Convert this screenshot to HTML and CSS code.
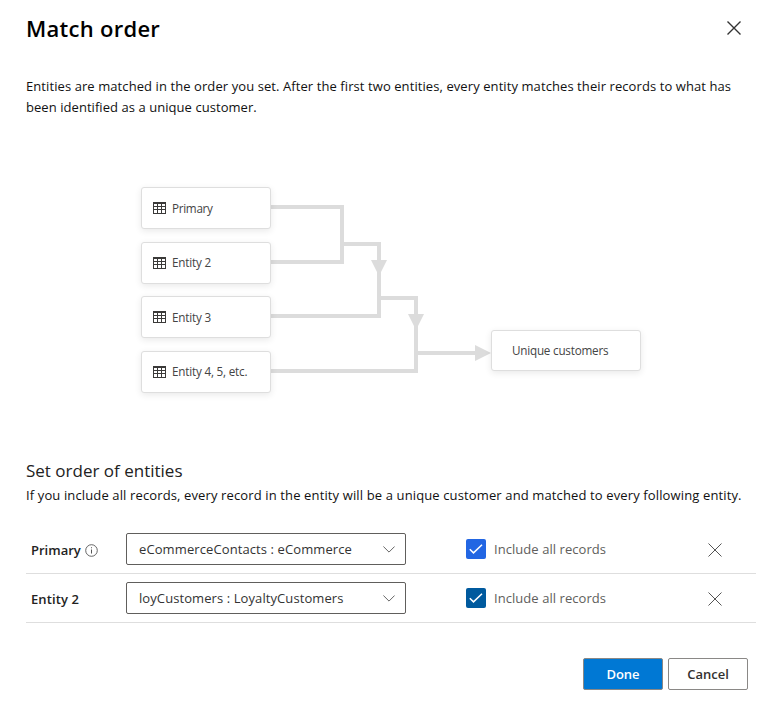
FILE: index.html
```html
<!DOCTYPE html>
<html lang="en">
<head>
<meta charset="utf-8">
<title>Match order</title>
<link rel="stylesheet" href="styles.css">
</head>
<body>
<svg class="defs" width="0" height="0">
  <symbol id="table" viewBox="0 0 13 12"><path d="M0 0h13v12H0zM1 2v2h3V2zM5 2v2h3V2zM9 2v2h3V2zM1 5v2h3V5zM5 5v2h3V5zM9 5v2h3V5zM1 8v3h3V8zM5 8v3h3V8zM9 8v3h3V8z" fill="#3b3a39" fill-rule="evenodd"/></symbol>
  <symbol id="cross" viewBox="0 0 14 14"><path d="M.5 .5l13 13M13.5 .5l-13 13" fill="none" stroke="currentColor"/></symbol>
  <symbol id="chevron" viewBox="0 0 12 7"><path d="M.4 .5L6 6.1 11.6 .5" fill="none" stroke="currentColor"/></symbol>
  <symbol id="check" viewBox="0 0 14 10"><path d="M.8 5.2l3.7 3.7L13 .8" fill="none" stroke="#fff" stroke-width="1.5"/></symbol>
</svg>
<main class="dialog">
  <header class="header">
    <h1 class="title"><span>Match order</span></h1>
    <button class="close" aria-label="Close"><svg width="14" height="14"><use href="#cross"/></svg></button>
  </header>
  <p class="intro"><span class="line-one">Entities are matched in the order you set. After the first two entities, every entity matches their records to what has</span><br><span class="line-two">been identified as a unique customer.</span></p>

  <section class="diagram">
    <svg class="links" width="778" height="230" viewBox="0 175 778 230">
      <g fill="none" stroke="#dcdcdc" stroke-width="4">
        <path d="M271 207h71v55h-71M342 244h37v72H271M379 298h37v73H271M416 353h60"/>
      </g>
      <path d="M371 260h16l-8 16zM408 314h16l-8 16zM475 345v16l16-8z" fill="#dcdcdc"/>
    </svg>
    <div class="node n1"><svg width="13" height="12"><use href="#table"/></svg><span>Primary</span></div>
    <div class="node n2"><svg width="13" height="12"><use href="#table"/></svg><span>Entity 2</span></div>
    <div class="node n3"><svg width="13" height="12"><use href="#table"/></svg><span>Entity 3</span></div>
    <div class="node n4"><svg width="13" height="12"><use href="#table"/></svg><span>Entity 4, 5, etc.</span></div>
    <div class="node result"><span>Unique customers</span></div>
  </section>

  <section class="order">
    <h2 class="subtitle"><span>Set order of entities</span></h2>
    <p class="hint"><span>If you include all records, every record in the entity will be a unique customer and matched to every following entity.</span></p>
    <div class="row">
      <div class="label"><span class="primary">Primary</span>
        <svg class="info" width="13" height="13" viewBox="0 0 13 13"><circle cx="6.5" cy="6.5" r="5.8" fill="none" stroke="#555" stroke-width=".9"/><path d="M6 3.3h1v1H6zM6 5.4h1v4.2H6z" fill="#555"/></svg></div>
      <div class="select"><span class="value-one">eCommerceContacts : eCommerce</span><svg width="12" height="7"><use href="#chevron"/></svg></div>
      <div class="include"><span class="box bright"><svg width="14" height="10"><use href="#check"/></svg></span><span class="text">Include all records</span></div>
      <button class="remove" aria-label="Remove"><svg width="14" height="14"><use href="#cross"/></svg></button>
    </div>
    <div class="row">
      <div class="label"><span class="second">Entity 2</span></div>
      <div class="select"><span class="value-two">loyCustomers : LoyaltyCustomers</span><svg width="12" height="7"><use href="#chevron"/></svg></div>
      <div class="include"><span class="box"><svg width="14" height="10"><use href="#check"/></svg></span><span class="text">Include all records</span></div>
      <button class="remove" aria-label="Remove"><svg width="14" height="14"><use href="#cross"/></svg></button>
    </div>
  </section>
  <footer class="actions">
    <button class="button done"><span>Done</span></button>
    <button class="button cancel"><span>Cancel</span></button>
  </footer>
</main>
</body>
</html>
```
FILE: styles.css
```css
* { box-sizing: border-box; }
body { margin: 0; background: #fff; color: #111; font: 13px/21px "Open Sans", "Noto Sans", sans-serif; }
h1, h2, p { margin: 0; white-space: nowrap; }
svg { display: block; flex: none; }
.defs { position: absolute; }
button { font: inherit; border: 0; padding: 0; background: none; }
.dialog { height: 701px; display: flex; flex-direction: column; overflow: hidden; }
.header { height: 76px; padding: 12px 37px 0 26px; display: flex; justify-content: space-between; align-items: flex-start; }
.title { font-size: 22px; line-height: 32px; font-weight: 600; letter-spacing: .27px; color: #000; }
.close { padding-top: 9px; color: #333; }
.close svg { stroke-width: 1.4; }
.intro { height: 99px; padding-left: 26px; }
.line-one { letter-spacing: .083px; }
.line-two { letter-spacing: .055px; }

.diagram { position: relative; height: 230px; flex: none; }
.links { position: absolute; inset: 0; }
.node { position: absolute; left: 141px; width: 130px; height: 42px; padding-left: 11px; display: flex; align-items: center; gap: 6px; background: #fff; border: 1px solid #dedede; border-radius: 3px; box-shadow: 0 2px 7px rgba(0,0,0,.09); color: #444; font-size: 11.7px; line-height: 16px; letter-spacing: -.2px; white-space: nowrap; }
.n1 { top: 12px; }
.n2 { top: 67px; }
.n3 { top: 121px; }
.n4 { top: 176px; }
.n2 span, .n4 span, .result span { padding-bottom: 2px; }
.n1 { letter-spacing: -.3px; }
.result { left: 491px; top: 155px; width: 150px; height: 41px; padding-left: 20px; letter-spacing: -.22px; }

.order { padding: 54px 22px 0 26px; }
.subtitle { font-size: 17px; line-height: 24px; font-weight: 400; color: #222; }
.hint { line-height: 24px; letter-spacing: .128px; }
.subtitle + .hint { margin-bottom: 18px; }
.row { height: 49px; border-bottom: 1px solid #dedede; display: grid; grid-template-columns: 100px 340px 242px 14px; align-items: center; }
.label { padding: 2px 0 0 5px; display: flex; align-items: center; gap: 4px; font-weight: 600; color: #222; white-space: nowrap; }
.second { letter-spacing: .1px; }
.select { width: 280px; height: 32px; padding: 0 10px 0 12px; border: 1px solid #605e5c; border-radius: 2px; display: flex; align-items: center; justify-content: space-between; color: #333; white-space: nowrap; }
.select svg { color: #666; }
.value-one { letter-spacing: .1px; }
.value-two { letter-spacing: .085px; }
.include { display: flex; align-items: center; gap: 8px; color: #605e5c; letter-spacing: .055px; white-space: nowrap; }
.box { width: 20px; height: 20px; border-radius: 2px; background: #005a9e; display: flex; align-items: center; justify-content: center; }
.bright { background: #2266e3; }
.remove { padding: 2px 0 0; color: #555; }
.actions { padding: 35px 30px 0; display: flex; justify-content: flex-end; gap: 5px; }
.button { width: 80px; height: 32px; border: 1px solid #8a8886; border-radius: 2px; font-weight: 600; color: #323130; }
.done { background: #0078d4; color: #fff; }
```
